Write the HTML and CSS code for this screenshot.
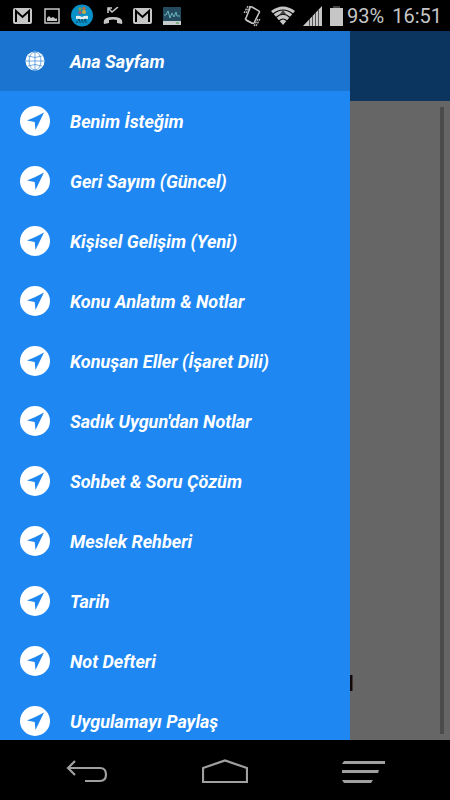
FILE: index.html
```html
<!DOCTYPE html>
<html lang="tr">
<head>
<meta charset="utf-8">
<meta name="viewport" content="width=device-width, initial-scale=1">
<title>Ana Sayfam</title>
<link rel="stylesheet" href="styles.css">
</head>
<body>
<svg class="defs" aria-hidden="true">
  <symbol id="arrow" viewBox="0 0 30 30">
    <circle cx="15" cy="15" r="15" fill="#fff"/>
    <path d="M24 6.500 15.500 24 14.700 16 7 14.500Q16 11 24 6.500Z" fill="#1e87f2"/>
  </symbol>
  <symbol id="mail" viewBox="0 0 20 16">
    <rect x="0" y="0" width="19" height="16" rx="2" fill="#c6c6c6"/>
    <path d="M3 14V3L9.500 9 16 3V14" fill="none" stroke="#000" stroke-width="2"/>
  </symbol>
</svg>
<header class="status">
  <div class="notices">
    <svg width="20" height="16"><use href="#mail"/></svg>
    <svg width="18" height="16" viewBox="-1 0 18 16"><path d="M1 1H15V15H1Z" fill="none" stroke="#c6c6c6" stroke-width="1.500"/><path d="M3 13V10L5 8 7 10 9 9 12 11 13 10V13Z" fill="#c6c6c6"/></svg>
    <svg width="22" height="23" viewBox="0 0 22 23"><circle cx="11" cy="11.500" r="11" fill="#0791c8"/><path d="M5 12Q8 11 11 13 14 11 17 12V15Q14 14 11 16 8 14 5 15Z" fill="#e4efed"/><circle cx="9" cy="5" r="1.700" fill="#7b9d4c"/><circle cx="13" cy="4.500" r="1.700" fill="#bd6f45"/><circle cx="13" cy="8" r="2" fill="#c7ad3f"/><circle cx="9" cy="8.500" r="1.700" fill="#a6576c"/><path d="M7 16H15" stroke="#07405c" stroke-width="1.500" stroke-dasharray="2 1"/><path d="M5 18H17" stroke="#07405c" stroke-dasharray="2 1"/></svg>
    <svg width="20" height="18" viewBox="0 0 20 18"><path d="M1 17Q-1 10 10 10 21 10 19 17L14 16V13Q10 12 6 13V16Z" fill="#c6c6c6"/><path d="M5 6V1H9M5 1 9 5 15 0" fill="none" stroke="#c6c6c6" stroke-width="1.600"/></svg>
    <svg width="20" height="16"><use href="#mail"/></svg>
    <svg width="18" height="18" viewBox="0 0 18 18"><rect width="18" height="18" rx="1" fill="#254b60"/><path d="M0 14H18V18H0Z" fill="#c6cccc"/><path d="M1 8H3L5 4 7 11 9 6 11 10 13 5 14 9H17" fill="none" stroke="#68b5bb"/><path d="M13 16H16" stroke="#39933f"/></svg>
  </div>
  <div class="system">
    <svg width="20" height="22" viewBox="0 0 20 22"><path d="M9 2 16 6Q17 7 16 8L11 18Q10 19 9 18L3 15Q2 14 3 13L7 3Q8 1 9 2Z" fill="none" stroke="#c6c6c6" stroke-width="1.500"/><path d="M3 14 10 18 9 19 3 16Z" fill="#c6c6c6"/><path d="M1 8 5 1M3 8 7 1M11 21 15 14M13 21 17 14" stroke="#c6c6c6" stroke-width="1.200" stroke-dasharray="2 1"/></svg>
    <svg width="24" height="20" viewBox="0 0 24 20"><path d="M12 19 0 5Q12-4 24 5Z" fill="#c6c6c6"/><path d="M2 8Q12 0 22 8M5 11.500Q12 5 19 11.500M8 15Q12 11 16 15" fill="none" stroke="#000" stroke-width="1.100"/><path d="M12 4 15 8H9Z" fill="#444"/></svg>
    <svg width="19" height="20" viewBox="0 0 19 20"><path d="M0 20 19 0V20Z" fill="#c6c6c6"/><path d="M6.500 13V20M9.500 10V20M12.500 7V20M15.500 4V20" stroke="#555"/></svg>
    <svg class="battery" width="13" height="20" viewBox="0 0 13 20"><path d="M0 2H13V20H0Z" fill="#c6c6c6"/><path d="M3 0H10V2H3Z" fill="#444"/></svg>
    <span class="percent">93%</span><time>16:51</time>
  </div>
</header>
<main class="screen">
  <nav class="drawer" aria-label="Menü">
    <a class="item current" href="#"><svg width="30" height="30" viewBox="0 0 30 30"><circle cx="15" cy="15" r="9.500" fill="#fff"/><g fill="none" stroke="#1b75d0" stroke-width=".6"><path d="M6 15H24M15 6V24M8 10Q15 13 22 10M8 20Q15 17 22 20"/><ellipse cx="15" cy="15" rx="6" ry="9"/></g></svg>Ana Sayfam</a>
    <a class="item" href="#"><svg width="30" height="30"><use href="#arrow"/></svg>Benim İsteğim</a>
    <a class="item" href="#"><svg width="30" height="30"><use href="#arrow"/></svg>Geri Sayım (Güncel)</a>
    <a class="item" href="#"><svg width="30" height="30"><use href="#arrow"/></svg>Kişisel Gelişim (Yeni)</a>
    <a class="item" href="#"><svg width="30" height="30"><use href="#arrow"/></svg>Konu Anlatım &amp; Notlar</a>
    <a class="item" href="#"><svg width="30" height="30"><use href="#arrow"/></svg>Konuşan Eller (İşaret Dili)</a>
    <a class="item" href="#"><svg width="30" height="30"><use href="#arrow"/></svg>Sadık Uygun'dan Notlar</a>
    <a class="item" href="#"><svg width="30" height="30"><use href="#arrow"/></svg>Sohbet &amp; Soru Çözüm</a>
    <a class="item" href="#"><svg width="30" height="30"><use href="#arrow"/></svg>Meslek Rehberi</a>
    <a class="item" href="#"><svg width="30" height="30"><use href="#arrow"/></svg>Tarih</a>
    <a class="item" href="#"><svg width="30" height="30"><use href="#arrow"/></svg>Not Defteri</a>
    <a class="item" href="#"><svg width="30" height="30"><use href="#arrow"/></svg>Uygulamayı Paylaş</a>
  </nav>
  <div class="page">
    <div class="appbar"></div>
    <div class="content"><div class="edge"></div><div class="scrollbar"></div></div>
  </div>
</main>
<footer class="keys">
  <button aria-label="Geri"><svg width="42" height="24" viewBox="0 0 42 24"><path d="M9 1 2 8 9 15M2 8H34Q40 8 40 14.500T34 21H19" fill="none" stroke="#a0a0a0" stroke-width="2.200"/></svg></button>
  <button aria-label="Ana ekran"><svg width="46" height="26" viewBox="0 0 46 26"><path d="M1 23V9L23 1.500 45 9V23Z" fill="none" stroke="#a0a0a0" stroke-width="2.200"/></svg></button>
  <button aria-label="Son uygulamalar"><svg width="44" height="24" viewBox="0 0 44 24"><path d="M3 1H44V4H1ZM1 10H38L37 13H1ZM1 20H32L30 23H3Z" fill="#a0a0a0"/></svg></button>
</footer>
</body>
</html>
```
FILE: styles.css
```css
* { box-sizing: border-box; }
body {
  margin: 0;
  height: 100vh;
  display: flex;
  flex-direction: column;
  overflow: hidden;
  background: #000;
  font-family: Roboto, sans-serif;
}
svg { display: block; flex: none; }
.defs { position: absolute; width: 0; height: 0; }
.status {
  flex: none;
  height: 31px;
  padding: 0 8px 0 13px;
  display: flex;
  align-items: center;
  justify-content: space-between;
  color: #c6c6c6;
  font-size: 20px;
}
.notices { display: flex; align-items: center; gap: 10px; }
.system { display: flex; align-items: center; gap: 8px; }
.percent { margin-left: -4px; }
.screen { flex: 1; min-height: 0; display: flex; }
.drawer {
  width: calc(100% - 100px);
  flex: none;
  overflow: hidden;
  background: #1e87f2;
}
.item {
  height: 60px;
  padding: 0 20px;
  display: flex;
  align-items: center;
  gap: 20px;
  color: #fff;
  font-size: 18px;
  font-weight: 700;
  font-style: italic;
  text-decoration: none;
  white-space: nowrap;
}
.current { background: #1b75d0; }
.page { flex: 1; display: flex; flex-direction: column; }
.appbar { height: 70px; background: #0b355f; }
.content {
  flex: 1;
  padding: 6px 6px 6px 0;
  display: flex;
  justify-content: space-between;
  background: #666;
}
.edge {
  width: 3px;
  height: 16px;
  margin-bottom: 43px;
  align-self: flex-end;
  border-right: 1px solid #423a36;
  background: #130909;
}
.scrollbar { width: 4px; background: #4b4b4b; }
.keys {
  flex: none;
  height: 60px;
  padding: 0 18px;
  display: grid;
  grid-template-columns: repeat(3, 1fr);
}
.keys button {
  padding: 4px 0 0;
  border: 0;
  background: none;
  display: grid;
  place-items: center;
}
```
